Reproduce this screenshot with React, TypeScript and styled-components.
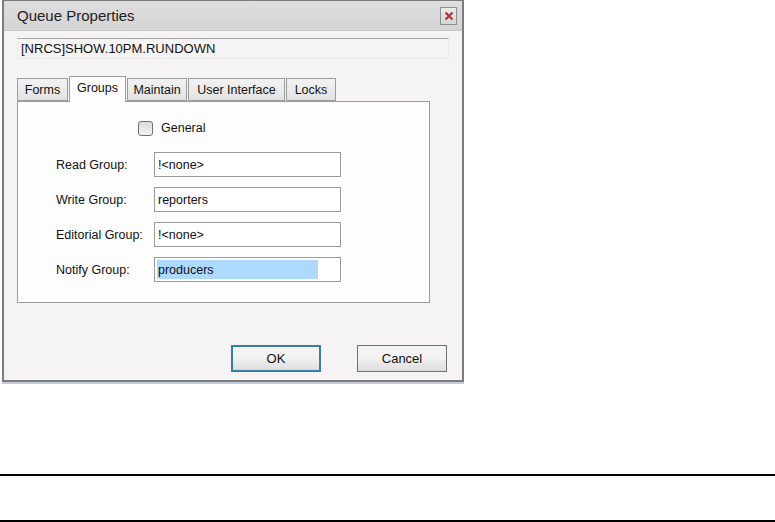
import React from 'react'
import styled, { createGlobalStyle } from 'styled-components'

const GlobalStyle = createGlobalStyle`
  html, body {
    margin: 0;
    padding: 0;
    background: #ffffff;
    font-family: 'Liberation Sans', Arial, sans-serif;
    color: #111;
  }
`

const Page = styled.div`
  width: 775px;
  height: 522px;
  overflow: hidden;
`

const Dialog = styled.div`
  margin-left: 2px;
  width: 462px;
  height: 382px;
  box-sizing: border-box;
  border: 2px solid #7c7c7c;
  border-top-width: 1px;
  background: #f6f3f5;
  box-shadow: 0 2px 0 #c3cbd8;
  display: flex;
  flex-direction: column;
`

const TitleBar = styled.div`
  height: 29px;
  flex: none;
  display: flex;
  align-items: center;
  justify-content: space-between;
  padding: 0 5px 0 13px;
  background: linear-gradient(#dedede, #d4d4d4);
  border-bottom: 1px solid #c6c6c6;
  font-size: 15px;
  color: #222;
`

const CloseButton = styled.div`
  width: 17px;
  height: 18px;
  box-sizing: border-box;
  border: 1px solid #8e8e8e;
  background: linear-gradient(#ececec, #d6d6d6);
  display: flex;
  align-items: center;
  justify-content: center;
`

const Body = styled.div`
  flex: 1;
  display: flex;
  flex-direction: column;
  padding: 7px 13px 0 13px;
`

const NameField = styled.div`
  height: 21px;
  box-sizing: border-box;
  border-top: 1px solid #a6a6a6;
  border-left: 1px solid #eaeaea;
  border-right: 1px solid #eaeaea;
  border-bottom: 1px solid #eaeaea;
  padding-left: 3px;
  display: flex;
  align-items: center;
  font-size: 13px;
`

const TabRow = styled.div`
  margin-top: 16px;
  display: flex;
  align-items: flex-end;
  height: 26px;
`

const Tab = styled.div<{ $width: number; $active?: boolean }>`
  width: ${({ $width }) => $width}px;
  height: ${({ $active }) => ($active ? 26 : 23)}px;
  box-sizing: border-box;
  margin-right: 1px;
  border: 1px solid #9c9c9c;
  border-bottom: ${({ $active }) => ($active ? 'none' : '1px solid #9c9c9c')};
  background: ${({ $active }) => ($active ? '#fdfdfd' : 'linear-gradient(#f2f2f2, #e3e3e3)')};
  display: flex;
  align-items: ${({ $active }) => ($active ? 'flex-start' : 'center')};
  padding-top: ${({ $active }) => ($active ? 4 : 0)}px;
  justify-content: center;
  font-size: 12.5px;
  position: relative;
  z-index: ${({ $active }) => ($active ? 1 : 0)};
  margin-bottom: ${({ $active }) => ($active ? -1 : 0)}px;
`

const Panel = styled.div`
  width: 413px;
  height: 202px;
  box-sizing: border-box;
  border: 1px solid #9c9c9c;
  background: #fdfdfd;
  padding: 18px 0 0 38px;
  display: flex;
  flex-direction: column;
`

const CheckRow = styled.label`
  display: flex;
  align-items: center;
  gap: 8px;
  margin-left: 82px;
  font-size: 12.5px;
  height: 16px;
`

const CheckBox = styled.span`
  width: 13px;
  height: 13px;
  border: 1px solid #6f6f6f;
  border-radius: 3px;
  background: linear-gradient(#dcdcdc, #f4f4f4);
`

const Fields = styled.div`
  margin-top: 16px;
  display: flex;
  flex-direction: column;
  gap: 10px;
`

const FieldRow = styled.div`
  display: flex;
  align-items: center;
  height: 25px;
`

const Label = styled.div`
  width: 98px;
  font-size: 12.5px;
`

const Input = styled.div`
  width: 187px;
  height: 25px;
  box-sizing: border-box;
  border: 1px solid #9a9a9a;
  background: #fff;
  padding: 2px;
  display: flex;
  align-items: center;
  font-size: 12.5px;
`

const Value = styled.span<{ $selected?: boolean }>`
  flex: ${({ $selected }) => ($selected ? '0 0 160px' : 'none')};
  height: 19px;
  display: flex;
  align-items: center;
  padding-left: 1px;
  background: ${({ $selected }) => ($selected ? '#acd9fd' : 'transparent')};
`

const ButtonRow = styled.div`
  margin-top: 42px;
  display: flex;
  justify-content: flex-end;
  gap: 36px;
  padding-right: 2px;
`

const Button = styled.div<{ $default?: boolean }>`
  width: 90px;
  height: 27px;
  box-sizing: border-box;
  border: ${({ $default }) => ($default ? '2px solid #3a7ca9' : '1px solid #707070')};
  background: linear-gradient(#f3f3f3 45%, #dddddd);
  display: flex;
  align-items: center;
  justify-content: center;
  font-size: 13px;
`

const Rule = styled.div<{ $gap: number }>`
  margin-top: ${({ $gap }) => $gap}px;
  height: 2px;
  background: #000;
`

const groups = [
  { label: 'Read Group:', value: '!<none>' },
  { label: 'Write Group:', value: 'reporters' },
  { label: 'Editorial Group:', value: '!<none>' },
  { label: 'Notify Group:', value: 'producers', selected: true },
]

const tabs = [
  { name: 'Forms', width: 51 },
  { name: 'Groups', width: 57, active: true },
  { name: 'Maintain', width: 60 },
  { name: 'User Interface', width: 97 },
  { name: 'Locks', width: 50 },
]

export default function App() {
  return (
    <Page>
      <GlobalStyle />
      <Dialog>
        <TitleBar>
          Queue Properties
          <CloseButton>
            <svg width="10" height="10" viewBox="0 0 10 10">
              <path d="M1.5 1.5 L8.5 8.5 M8.5 1.5 L1.5 8.5" stroke="#b3323a" strokeWidth="2.2" />
            </svg>
          </CloseButton>
        </TitleBar>
        <Body>
          <NameField>[NRCS]SHOW.10PM.RUNDOWN</NameField>
          <TabRow>
            {tabs.map((t) => (
              <Tab key={t.name} $width={t.width} $active={t.active}>
                {t.name}
              </Tab>
            ))}
          </TabRow>
          <Panel>
            <CheckRow>
              <CheckBox />
              General
            </CheckRow>
            <Fields>
              {groups.map((g) => (
                <FieldRow key={g.label}>
                  <Label>{g.label}</Label>
                  <Input>
                    <Value $selected={g.selected}>{g.value}</Value>
                  </Input>
                </FieldRow>
              ))}
            </Fields>
          </Panel>
          <ButtonRow>
            <Button $default>OK</Button>
            <Button>Cancel</Button>
          </ButtonRow>
        </Body>
      </Dialog>
      <Rule $gap={92} />
      <Rule $gap={44} />
    </Page>
  )
}
